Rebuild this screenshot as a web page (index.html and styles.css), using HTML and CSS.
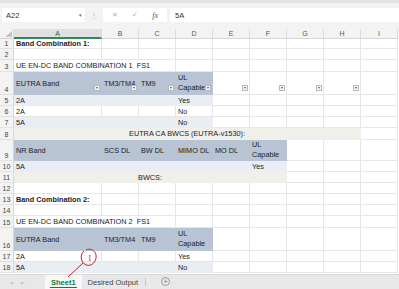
FILE: index.html
```html
<!DOCTYPE html>
<html lang="en">
<head>
  <meta charset="UTF-8">
  <meta name="viewport" content="width=device-width, initial-scale=1.0">
  <title>Band Combinations</title>
  <link rel="stylesheet" href="styles.css">
</head>
<body>
<div class="app">

  <div class="top-strip"></div>

  <!-- Formula bar -->
  <div class="formula-bar">
    <div class="name-box"><span>A22</span><span class="caret">&#9662;</span></div>
    <div class="grip">&#8942;</div>
    <div class="fx-buttons"><span>&#10005;</span><span>&#10003;</span><span class="fx">fx</span></div>
    <div class="formula-input">5A</div>
  </div>

  <!-- Grid -->
  <div class="sheet">
    <div class="row colheads">
      <div class="corner"></div>
      <div class="ch selected">A</div><div class="ch">B</div><div class="ch">C</div><div class="ch">D</div>
      <div class="ch">E</div><div class="ch">F</div><div class="ch">G</div><div class="ch">H</div><div class="ch">I</div>
    </div>

    <div class="row h10">
      <div class="rh">1</div>
      <div class="c bold">Band Combination 1:</div>
      <div class="c"></div><div class="c"></div><div class="c"></div><div class="c"></div>
      <div class="c"></div><div class="c"></div><div class="c"></div><div class="c"></div>
    </div>

    <div class="row h11">
      <div class="rh">2</div>
      <div class="c"></div><div class="c"></div><div class="c"></div><div class="c"></div><div class="c"></div>
      <div class="c"></div><div class="c"></div><div class="c"></div><div class="c"></div>
    </div>

    <div class="row h12">
      <div class="rh">3</div>
      <div class="c span3">UE EN-DC BAND COMBINATION 1&nbsp; FS1</div>
      <div class="c"></div><div class="c"></div><div class="c"></div>
      <div class="c"></div><div class="c"></div><div class="c"></div>
    </div>

    <div class="row h23">
      <div class="rh">4</div>
      <div class="c th">EUTRA Band<span class="filter"></span></div>
      <div class="c th">TM3/TM4<span class="filter"></span></div>
      <div class="c th">TM9<span class="filter"></span></div>
      <div class="c th wrap">UL Capable<span class="filter"></span></div>
      <div class="c"><span class="filter"></span></div>
      <div class="c"><span class="filter"></span></div>
      <div class="c"><span class="filter"></span></div>
      <div class="c"><span class="filter"></span></div>
      <div class="c"></div>
    </div>

    <div class="row h11">
      <div class="rh">5</div>
      <div class="c band">2A</div><div class="c band"></div><div class="c band"></div><div class="c band">Yes</div>
      <div class="c"></div><div class="c"></div><div class="c"></div><div class="c"></div><div class="c"></div>
    </div>

    <div class="row h11">
      <div class="rh">6</div>
      <div class="c">2A</div><div class="c"></div><div class="c"></div><div class="c">No</div>
      <div class="c"></div><div class="c"></div><div class="c"></div><div class="c"></div><div class="c"></div>
    </div>

    <div class="row h11">
      <div class="rh">7</div>
      <div class="c band">5A</div><div class="c band"></div><div class="c band"></div><div class="c band">No</div>
      <div class="c"></div><div class="c"></div><div class="c"></div><div class="c"></div><div class="c"></div>
    </div>

    <div class="row h12">
      <div class="rh">8</div>
      <div class="c merged span8">EUTRA CA BWCS (EUTRA-v1530):</div>
      <div class="c"></div>
    </div>

    <div class="row h21">
      <div class="rh">9</div>
      <div class="c th">NR Band</div>
      <div class="c th">SCS DL</div>
      <div class="c th">BW DL</div>
      <div class="c th">MIMO DL</div>
      <div class="c th">MO DL</div>
      <div class="c th wrap">UL Capable</div>
      <div class="c"></div><div class="c"></div><div class="c"></div>
    </div>

    <div class="row h11">
      <div class="rh">10</div>
      <div class="c band">5A</div><div class="c band"></div><div class="c band"></div>
      <div class="c band"></div><div class="c band"></div><div class="c band">Yes</div>
      <div class="c"></div><div class="c"></div><div class="c"></div>
    </div>

    <div class="row h11">
      <div class="rh">11</div>
      <div class="c merged span6">BWCS:</div>
      <div class="c"></div><div class="c"></div><div class="c"></div>
    </div>

    <div class="row h11">
      <div class="rh">12</div>
      <div class="c"></div><div class="c"></div><div class="c"></div><div class="c"></div><div class="c"></div>
      <div class="c"></div><div class="c"></div><div class="c"></div><div class="c"></div>
    </div>

    <div class="row h11">
      <div class="rh">13</div>
      <div class="c bold">Band Combination 2:</div>
      <div class="c"></div><div class="c"></div><div class="c"></div><div class="c"></div>
      <div class="c"></div><div class="c"></div><div class="c"></div><div class="c"></div>
    </div>

    <div class="row h11">
      <div class="rh">14</div>
      <div class="c"></div><div class="c"></div><div class="c"></div><div class="c"></div><div class="c"></div>
      <div class="c"></div><div class="c"></div><div class="c"></div><div class="c"></div>
    </div>

    <div class="row h12">
      <div class="rh">15</div>
      <div class="c span3">UE EN-DC BAND COMBINATION 2&nbsp; FS1</div>
      <div class="c"></div><div class="c"></div><div class="c"></div>
      <div class="c"></div><div class="c"></div><div class="c"></div>
    </div>

    <div class="row h23">
      <div class="rh">16</div>
      <div class="c th">EUTRA Band</div>
      <div class="c th">TM3/TM4</div>
      <div class="c th">TM9</div>
      <div class="c th wrap">UL Capable</div>
      <div class="c"></div><div class="c"></div><div class="c"></div><div class="c"></div><div class="c"></div>
    </div>

    <div class="row h11">
      <div class="rh">17</div>
      <div class="c">2A</div><div class="c"></div><div class="c"></div><div class="c">Yes</div>
      <div class="c"></div><div class="c"></div><div class="c"></div><div class="c"></div><div class="c"></div>
    </div>

    <div class="row h11">
      <div class="rh">18</div>
      <div class="c band">5A</div><div class="c band"></div><div class="c band"></div><div class="c band">No</div>
      <div class="c"></div><div class="c"></div><div class="c"></div><div class="c"></div><div class="c"></div>
    </div>
  </div>

  <!-- Sheet tabs -->
  <div class="tabs">
    <div class="nav"><span>&#9664;</span><span>&#9654;</span></div>
    <div class="tab active">Sheet1</div>
    <div class="tab">Desired Output</div>
    <div class="tab-sep"></div>
    <div class="add-sheet">+</div>
  </div>

  <!-- Red pen annotation -->
  <svg class="annotation" width="399" height="289" viewBox="0 0 399 289">
    <path d="M84 251 C 80 254, 80 262, 86 265 C 92 267, 97 261, 96 255 C 95 250, 90 248, 86 250" fill="none" stroke="#e0161b" stroke-width="1"/>
    <text x="88.5" y="261" fill="#e0161b" font-size="8" font-family="Liberation Serif, serif">I</text>
    <path d="M83 263 C 78 268, 73 272, 68 277" fill="none" stroke="#e0161b" stroke-width="1"/>
  </svg>
</div>
</body>
</html>
```

FILE: styles.css
```css
* {
  margin: 0;
  padding: 0;
  box-sizing: border-box;
}

body {
  font-family: 'Liberation Sans', Arial, sans-serif;
  font-size: 7.3px;
  color: #222;
  background-color: #fff;
}

.app {
  position: relative;
  width: 399px;
  height: 289px;
  overflow: hidden;
}

.top-strip {
  height: 3px;
  background-color: #e3e3e3;
}

/* formula bar */
.formula-bar {
  height: 26px;
  display: flex;
  align-items: flex-start;
  padding: 5px 0 0 2px;
  background-color: #f3f3f3;
}

.name-box {
  width: 83px;
  height: 14px;
  display: flex;
  justify-content: space-between;
  align-items: center;
  padding: 0 3px 0 4px;
  background-color: #fff;
  color: #333;
  font-size: 7.5px;
}

.caret {
  font-size: 5px;
  color: #666;
}

.grip {
  width: 18px;
  height: 14px;
  display: flex;
  justify-content: center;
  align-items: center;
  color: #b5b5b5;
  font-size: 8px;
}

.fx-buttons {
  width: 64px;
  height: 14px;
  display: flex;
  align-items: center;
  justify-content: space-around;
  padding: 0 2px;
  background-color: #fff;
  color: #b3b3b3;
  font-size: 7px;
}

.fx-buttons .fx {
  font-family: 'Liberation Serif', serif;
  font-style: italic;
  font-size: 8px;
  color: #555;
}

.formula-input {
  flex: 1;
  height: 14px;
  margin-left: 3px;
  display: flex;
  align-items: center;
  padding-left: 5px;
  background-color: #fff;
  font-size: 7.5px;
  color: #333;
}

/* sheet grid */
.sheet {
  height: 245px;
}

.row {
  display: grid;
  grid-template-columns: 14px 88px repeat(8, 37px) 1fr;
}

.h10 { height: 10px; }
.h11 { height: 11px; }
.h12 { height: 12px; }
.h21 { height: 21px; }
.h23 { height: 23px; }

.colheads {
  height: 10px;
  background-color: #f3f3f3;
}

.corner {
  position: relative;
  border-right: 1px solid #d6d6d6;
  border-bottom: 1px solid #d6d6d6;
}

.corner::after {
  content: '';
  position: absolute;
  right: 1px;
  bottom: 1px;
  border-left: 7px solid transparent;
  border-bottom: 6px solid #c3c3c3;
}

.ch {
  display: flex;
  justify-content: center;
  align-items: center;
  font-size: 7px;
  color: #555;
  border-right: 1px solid #dadada;
  border-bottom: 1px solid #d6d6d6;
}

.ch.selected {
  background-color: #e0e0e0;
  color: #1d6b3e;
  border-bottom: 2px solid #2e8b57;
}

.rh {
  display: flex;
  justify-content: center;
  align-items: flex-end;
  padding-bottom: 1px;
  font-size: 7px;
  color: #444;
  background-color: #f3f3f3;
  border-right: 1px solid #d6d6d6;
  border-bottom: 1px solid #e2e2e2;
}

.c {
  position: relative;
  display: flex;
  align-items: center;
  padding: 0 2px;
  white-space: nowrap;
  overflow: hidden;
  border-right: 1px solid #e6e6e6;
  border-bottom: 1px solid #e6e6e6;
}

.bold {
  font-weight: bold;
}

.span3 { grid-column: span 3; }
.span6 { grid-column: span 6; }
.span8 { grid-column: span 8; }

.th {
  background-color: #b8c4d4;
  border-color: transparent;
}

.band {
  background-color: #e9eef5;
  border-color: transparent;
}

.merged {
  justify-content: center;
  background-color: #f0efea;
  border-color: transparent;
}

.wrap {
  white-space: normal;
  line-height: 10px;
}

.filter {
  position: absolute;
  right: 1px;
  bottom: 3px;
  width: 6px;
  height: 6px;
  background-color: #f7f7f7;
  border: 1px solid #b9b9b9;
}

.filter::after {
  content: '';
  position: absolute;
  left: 1px;
  top: 1px;
  border-left: 1.5px solid transparent;
  border-right: 1.5px solid transparent;
  border-top: 2px solid #555;
}

/* sheet tabs */
.tabs {
  height: 15px;
  margin-top: 0;
  display: flex;
  align-items: stretch;
  background-color: #e8e8e8;
  border-top: 1px solid #d9d9d9;
  font-size: 7.5px;
}

.nav {
  width: 45px;
  display: flex;
  gap: 8px;
  align-items: center;
  padding-left: 10px;
  font-size: 4px;
  color: #c2c2c2;
}

.tab {
  display: flex;
  align-items: center;
  padding: 0 6px;
  color: #444;
}

.tab.active {
  position: relative;
  background-color: #f7f7f7;
  color: #107c41;
  font-weight: bold;
}

.tab.active::after {
  content: '';
  position: absolute;
  left: 5px;
  right: 5px;
  bottom: 1px;
  height: 1px;
  background-color: #107c41;
}

.tab-sep {
  width: 1px;
  margin: 3px 0 3px 1px;
  background-color: #c4c4c4;
}

.add-sheet {
  width: 9px;
  height: 9px;
  margin: 2px 0 0 15px;
  border: 1px solid #9a9a9a;
  border-radius: 50%;
  display: flex;
  justify-content: center;
  align-items: center;
  font-size: 7px;
  line-height: 1;
  color: #777;
}

.annotation {
  position: absolute;
  left: 0;
  top: 0;
  pointer-events: none;
}
```
